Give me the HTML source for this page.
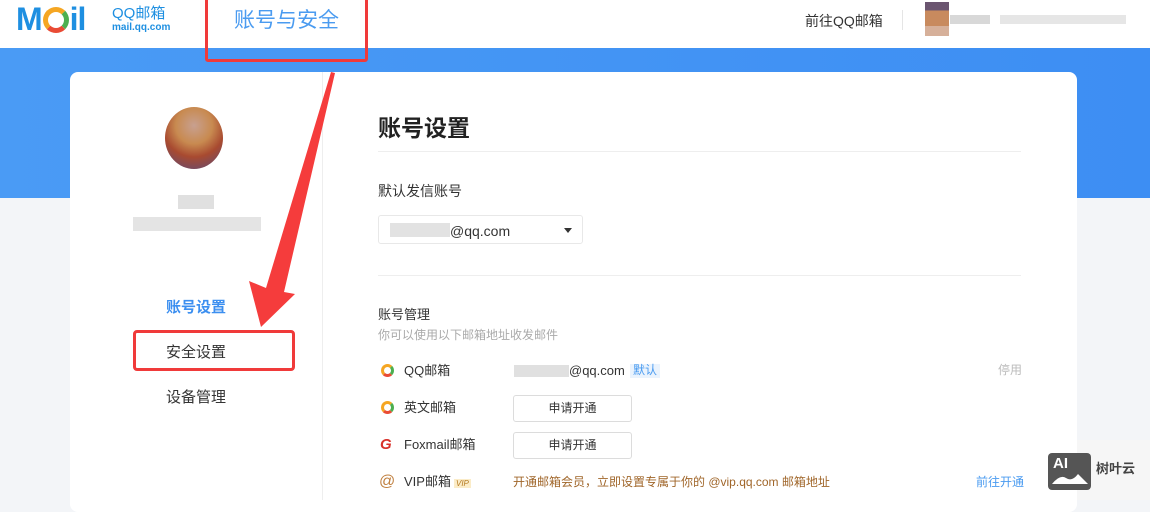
<!DOCTYPE html>
<html><head><meta charset="utf-8"><style>
*{margin:0;padding:0;box-sizing:border-box}
body{width:1150px;height:500px;overflow:hidden;position:relative;background:#f3f5f8;font-family:"Liberation Sans","Noto Sans CJK SC",sans-serif;color:#333}
.abs{position:absolute}
.top{left:0;top:0;width:1150px;height:48px;background:#fff}
.band{left:0;top:48px;width:1150px;height:150px;background:linear-gradient(90deg,#4a9bf5,#3d8ef3)}
.card{left:70px;top:72px;width:1007px;height:440px;background:#fff;border-radius:8px}
.t{position:absolute;white-space:nowrap;line-height:1.15;margin-top:2px}
.lg{margin-top:0}
.btn{position:absolute;width:119px;height:27px;border:1px solid #dcdcdc;border-radius:3px;font-size:12px;text-align:center;line-height:25px;color:#333}
</style></head><body>
<div class="abs top"></div>
<div class="abs band"></div>
<div class="abs card"></div>
<!-- logo -->
<div class="t lg" style="left:16px;top:3px;font-size:32px;font-weight:bold;color:#1e8fe1;letter-spacing:-1px;line-height:1">M<span style="display:inline-block;width:26px;height:26px;border-radius:50%;border:5px solid #f5a623;border-right-color:#4caf50;border-bottom-color:#e94b35;vertical-align:-3px;margin:0 1px"></span>il</div>
<div class="t lg" style="left:112px;top:6px;font-size:15px;color:#1e8fe1;line-height:1">QQ邮箱</div>
<div class="t lg" style="left:112px;top:23px;font-size:10px;font-weight:bold;color:#1e8fe1;line-height:1">mail.qq.com</div>
<div class="t" style="left:234px;top:7px;font-size:21px;color:#4a9bf0">账号与安全</div>
<div class="abs" style="left:205px;top:-4px;width:163px;height:66px;border:3px solid #f03a3a;border-radius:3px"></div>
<div class="t" style="left:805px;top:11px;font-size:14px;color:#333">前往QQ邮箱</div>
<div class="abs" style="left:902px;top:10px;width:1px;height:20px;background:#e5e5e5"></div>
<div class="abs" style="left:925px;top:2px;width:24px;height:34px;background:linear-gradient(#6b5570 0 25%,#c88a5e 25% 70%,#d6b09a 70%)"></div>
<div class="abs" style="left:950px;top:15px;width:40px;height:9px;background:#d8d8d8"></div>
<div class="abs" style="left:1000px;top:15px;width:126px;height:9px;background:#e6e6e6"></div>
<!-- sidebar -->
<div class="abs" style="left:322px;top:72px;width:1px;height:428px;background:#eee"></div>
<div class="abs" style="left:165px;top:107px;width:58px;height:62px;border-radius:50%;background:radial-gradient(circle at 50% 30%,#c8a090 0,#c88a50 35%,#a84a30 60%,#6b4a6a 90%)"></div>
<div class="abs" style="left:178px;top:195px;width:36px;height:14px;background:#e0e0e0"></div>
<div class="abs" style="left:133px;top:217px;width:128px;height:14px;background:#e4e4e4"></div>
<div class="t" style="left:166px;top:297px;font-size:15px;font-weight:bold;color:#3c8ff0">账号设置</div>
<div class="t" style="left:166px;top:342px;font-size:15px;color:#333">安全设置</div>
<div class="abs" style="left:133px;top:330px;width:162px;height:41px;border:3px solid #f03a3a;border-radius:4px"></div>
<div class="t" style="left:166px;top:387px;font-size:15px;color:#333">设备管理</div>
<!-- arrow -->
<svg class="abs" style="left:0;top:0" width="1150" height="500"><polygon points="331,72 335,73 284,292 295,294 261,327 249,281 266,288" fill="#f53c3c"/></svg>
<!-- main -->
<div class="t" style="left:378px;top:113px;font-size:23px;font-weight:bold;color:#222">账号设置</div>
<div class="abs" style="left:378px;top:151px;width:643px;height:1px;background:#eee"></div>
<div class="t" style="left:378px;top:181px;font-size:14px;color:#333">默认发信账号</div>
<div class="abs" style="left:378px;top:215px;width:205px;height:29px;border:1px solid #e8e8e8;border-radius:3px"></div>
<div class="abs" style="left:390px;top:223px;width:60px;height:14px;background:#e2e2e2"></div>
<div class="t" style="left:450px;top:221px;font-size:14px;color:#333">@qq.com</div>
<div class="abs" style="left:564px;top:228px;border:4px solid transparent;border-top:5px solid #333"></div>
<div class="abs" style="left:378px;top:275px;width:643px;height:1px;background:#eee"></div>
<div class="t" style="left:378px;top:306px;font-size:13px;color:#333">账号管理</div>
<div class="t" style="left:378px;top:327px;font-size:12px;color:#aaa">你可以使用以下邮箱地址收发邮件</div>
<div class="abs" style="left:381px;top:364px;width:13px;height:13px;border-radius:50%;border:3px solid #f5a623;border-right-color:#4caf50;border-bottom-color:#e94b35"></div>
<div class="t" style="left:404px;top:362px;font-size:13px">QQ邮箱</div>
<div class="abs" style="left:514px;top:365px;width:55px;height:12px;background:#e0e0e0"></div>
<div class="t" style="left:569px;top:362px;font-size:13px">@qq.com</div>
<div class="t" style="left:630px;top:362px;font-size:12px;color:#4a9bf0;background:#eaf3fd;padding:0 3px">默认</div>
<div class="t" style="left:998px;top:362px;font-size:12px;color:#bbb">停用</div>
<div class="abs" style="left:381px;top:401px;width:13px;height:13px;border-radius:50%;border:3px solid #f5a623;border-right-color:#4caf50;border-bottom-color:#e94b35"></div>
<div class="t" style="left:404px;top:399px;font-size:13px">英文邮箱</div>
<div class="btn" style="left:513px;top:395px">申请开通</div>
<div class="t" style="left:380px;top:434px;font-size:15px;font-weight:bold;font-style:italic;color:#d8322b">G</div>
<div class="t" style="left:404px;top:436px;font-size:13px">Foxmail邮箱</div>
<div class="btn" style="left:513px;top:432px">申请开通</div>
<div class="t" style="left:379px;top:471px;font-size:16px;color:#c08040">@</div>
<div class="t" style="left:404px;top:473px;font-size:13px">VIP邮箱</div>
<div class="t" style="left:454px;top:477px;font-size:8px;font-style:italic;color:#b57a20;background:#fbecc8;padding:0 2px">VIP</div>
<div class="t" style="left:513px;top:474px;font-size:12px;color:#a0662a">开通邮箱会员，立即设置专属于你的 @vip.qq.com 邮箱地址</div>
<div class="t" style="left:976px;top:474px;font-size:12px;color:#4a9bf0">前往开通</div>
<!-- watermark -->
<div class="abs" style="left:1077px;top:440px;width:73px;height:60px;background:#f6f6f6"></div>
<div class="abs" style="left:1048px;top:453px;width:43px;height:37px;background:#555;border-radius:4px"></div>
<div class="t lg" style="left:1053px;top:455px;font-size:15px;font-weight:bold;color:#fff">AI</div>
<svg class="abs" style="left:1052px;top:470px" width="36" height="16"><path d="M0 14 Q8 4 14 8 T26 4 L36 14 Z" fill="#fff"/></svg>
<div class="t lg" style="left:1096px;top:462px;font-size:13px;font-weight:bold;color:#444">树叶云</div>
</body></html>
